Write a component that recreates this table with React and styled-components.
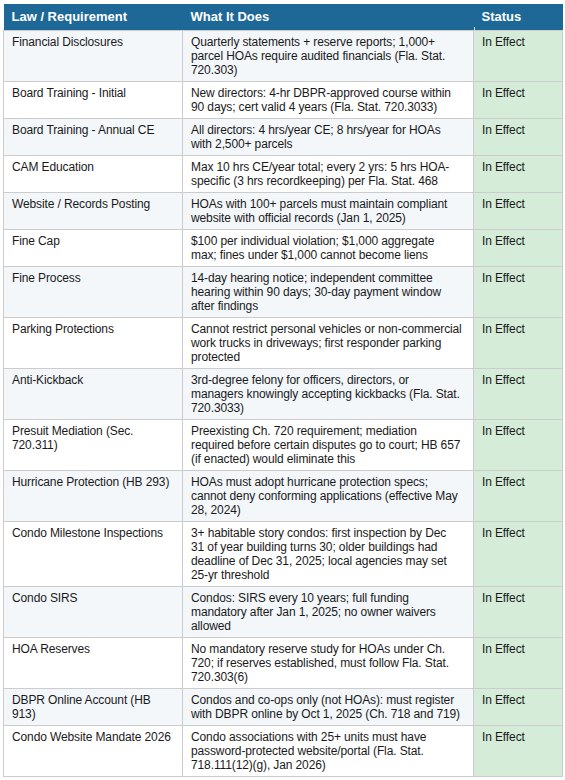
import React from 'react';
import styled, { createGlobalStyle } from 'styled-components';

const GlobalStyle = createGlobalStyle`
  html, body {
    margin: 0;
    padding: 0;
    background: #ffffff;
  }
  body {
    font-family: "Liberation Sans", Arial, sans-serif;
  }
`;

const Page = styled.div`
  padding: 4px 3px;
  width: 565px;
  box-sizing: border-box;
`;

const Table = styled.table`
  width: 559px;
  border-collapse: collapse;
  table-layout: fixed;
  font-family: "Liberation Sans", Arial, sans-serif;
`;

const HeadCell = styled.th`
  background: #1e6897;
  color: #ffffff;
  font-size: 13px;
  font-weight: 700;
  text-align: left;
  height: 26px;
  padding: 0 8px;
  box-sizing: border-box;
  position: relative;

  &:last-child::before {
    content: '';
    position: absolute;
    left: 0;
    bottom: 0;
    width: 1px;
    height: 3px;
    background: #d6e4ee;
  }
`;

const Row = styled.tr`
  background: ${({ $shade }) => ($shade ? '#f3f7fa' : '#ffffff')};
`;

const Cell = styled.td`
  border: 1px solid #cccccc;
  padding: 4px 4px 4px 8px;
  font-size: 12px;
  line-height: 14px;
  letter-spacing: -0.12px;
  white-space: pre-line;
  color: #1a1a1a;
  vertical-align: top;
  background: ${({ $status }) => ($status ? '#d5ecd9' : 'transparent')};
`;

// line breaks follow the source table
const ROWS = [
    ['Financial Disclosures', 'Quarterly statements + reserve reports; 1,000+\nparcel HOAs require audited financials (Fla. Stat.\n720.303)'],
    ['Board Training - Initial', 'New directors: 4-hr DBPR-approved course within\n90 days; cert valid 4 years (Fla. Stat. 720.3033)'],
    ['Board Training - Annual CE', 'All directors: 4 hrs/year CE; 8 hrs/year for HOAs\nwith 2,500+ parcels'],
    ['CAM Education', 'Max 10 hrs CE/year total; every 2 yrs: 5 hrs HOA-\nspecific (3 hrs recordkeeping) per Fla. Stat. 468'],
    ['Website / Records Posting', 'HOAs with 100+ parcels must maintain compliant\nwebsite with official records (Jan 1, 2025)'],
    ['Fine Cap', '$100 per individual violation; $1,000 aggregate\nmax; fines under $1,000 cannot become liens'],
    ['Fine Process', '14-day hearing notice; independent committee\nhearing within 90 days; 30-day payment window\nafter findings'],
    ['Parking Protections', 'Cannot restrict personal vehicles or non-commercial\nwork trucks in driveways; first responder parking\nprotected'],
    ['Anti-Kickback', '3rd-degree felony for officers, directors, or\nmanagers knowingly accepting kickbacks (Fla. Stat.\n720.3033)'],
    ['Presuit Mediation (Sec.\n720.311)', 'Preexisting Ch. 720 requirement; mediation\nrequired before certain disputes go to court; HB 657\n(if enacted) would eliminate this'],
    ['Hurricane Protection (HB 293)', 'HOAs must adopt hurricane protection specs;\ncannot deny conforming applications (effective May\n28, 2024)'],
    ['Condo Milestone Inspections', '3+ habitable story condos: first inspection by Dec\n31 of year building turns 30; older buildings had\ndeadline of Dec 31, 2025; local agencies may set\n25-yr threshold'],
    ['Condo SIRS', 'Condos: SIRS every 10 years; full funding\nmandatory after Jan 1, 2025; no owner waivers\nallowed'],
    ['HOA Reserves', 'No mandatory reserve study for HOAs under Ch.\n720; if reserves established, must follow Fla. Stat.\n720.303(6)'],
    ['DBPR Online Account (HB\n913)', 'Condos and co-ops only (not HOAs): must register\nwith DBPR online by Oct 1, 2025 (Ch. 718 and 719)'],
    ['Condo Website Mandate 2026', 'Condo associations with 25+ units must have\npassword-protected website/portal (Fla. Stat.\n718.111(12)(g), Jan 2026)'],
];

export default function App() {
    return (
        <Page>
            <GlobalStyle />
            <Table>
                <colgroup>
                    <col style={{ width: 179 }} />
                    <col style={{ width: 291 }} />
                    <col style={{ width: 89 }} />
                </colgroup>
                <thead>
                    <tr>
                        <HeadCell>Law / Requirement</HeadCell>
                        <HeadCell>What It Does</HeadCell>
                        <HeadCell>Status</HeadCell>
                    </tr>
                </thead>
                <tbody>
                    {ROWS.map(([law, what], i) => (
                        <Row key={law} $shade={i % 2 === 0}>
                            <Cell>{law}</Cell>
                            <Cell>{what}</Cell>
                            <Cell $status>In Effect</Cell>
                        </Row>
                    ))}
                </tbody>
            </Table>
        </Page>
    );
}
